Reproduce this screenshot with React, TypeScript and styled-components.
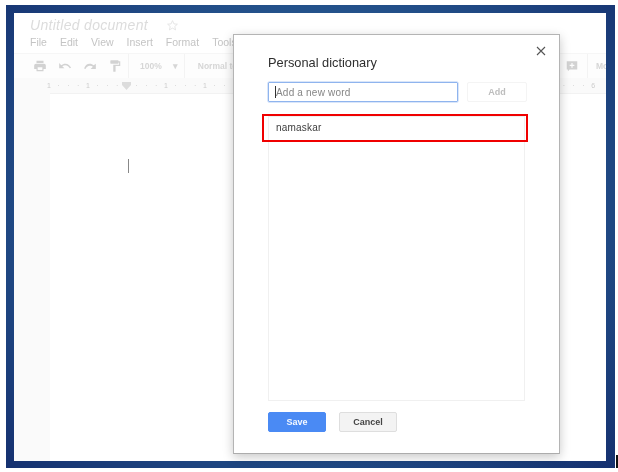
import styled, { createGlobalStyle } from "styled-components"

const GlobalStyle = createGlobalStyle`
  html, body {
    margin: 0;
    padding: 0;
    background: #fff;
  }
  body {
    font-family: "Liberation Sans", Arial, sans-serif;
  }
`;

const Page = styled.div`
  position: relative;
  width: 618px;
  height: 472px;
  overflow: hidden;
  background: #fff;
  padding: 5px 3px 4px 6px;
  box-sizing: border-box;
  filter: blur(0.3px);
`;

const Frame = styled.div`
  height: 100%;
  box-sizing: border-box;
  padding: 8px 9px 7px 8px;
  background: radial-gradient(ellipse at 50% 45%, #2f639b 0%, #24538c 55%, #15306f 100%);
`;

const Doc = styled.div`
  height: 100%;
  display: flex;
  flex-direction: column;
  overflow: hidden;
  background: #fff;
`;

const TitleRow = styled.div`
  display: flex;
  align-items: center;
  gap: 18px;
  height: 22px;
  padding: 2px 0 0 16px;
  box-sizing: border-box;
`;

const DocTitle = styled.span`
  font-size: 14px;
  font-style: italic;
  color: #dcdcdc;
  letter-spacing: 0.3px;
`;

const MenuRow = styled.div`
  display: flex;
  gap: 13px;
  height: 14px;
  align-items: center;
  padding-left: 16px;
`;

const MenuItem = styled.span`
  font-size: 10.5px;
  color: #c4c4c4;
`;

const Toolbar = styled.div`
  display: flex;
  align-items: center;
  height: 25px;
  margin-top: 4px;
  padding-left: 19px;
  background: #fdfdfd;
  border-top: 1px solid #f6f6f6;
  box-sizing: border-box;
`;

const ToolGroup = styled.div`
  display: flex;
  align-items: center;
  gap: 11px;
  height: 100%;
  padding-right: 6px;
  margin-right: 11px;
  border-right: 1px solid #f3f3f3;
`;

const ToolLabel = styled.span`
  font-size: 8.5px;
  font-weight: bold;
  color: #d6d6d6;
`;

const StyleLabel = styled(ToolLabel)`
  margin-left: 2px;
  white-space: nowrap;
`;

const RightTools = styled.div`
  display: flex;
  align-items: center;
  flex: 0 0 41px;
  height: 100%;
  margin-left: auto;
  overflow: hidden;
`;

const RightGroup = styled(ToolGroup)`
  padding-right: 8px;
  margin-right: 8px;
`;

const Ruler = styled.div`
  display: flex;
  align-items: center;
  justify-content: space-between;
  height: 15px;
  padding: 0 8px 0 30px;
  background: #fafafa;
`;

const RulerPart = styled.div`
  display: flex;
  align-items: center;
`;

const RulerMark = styled.span<{ $dot?: boolean }>`
  flex: 0 0 9.75px;
  display: flex;
  justify-content: center;
  font-size: 7px;
  color: ${({ $dot }) => ($dot ? "#d0d0d0" : "#cccccc")};
`;

const Workspace = styled.div`
  flex: 1;
  display: flex;
  background: #fafafa;
  padding-left: 36px;
`;

const Sheet = styled.div`
  flex: 1;
  background: #fff;
  padding: 65px 0 0 78px;
  border-top: 1px solid #f2f2f2;
`;

const Caret = styled.div`
  width: 1px;
  height: 14px;
  background: #888;
`;

const Dialog = styled.div`
  position: absolute;
  left: 233px;
  top: 34px;
  width: 327px;
  height: 420px;
  box-sizing: border-box;
  display: flex;
  flex-direction: column;
  padding: 20px 33px 21px 34px;
  background: #fff;
  border: 1px solid #b4b4b4;
  border-bottom-color: #acacac;
  box-shadow: 0 3px 10px rgba(0, 0, 0, 0.22);
`;

const Close = styled.button`
  position: absolute;
  right: 12px;
  top: 10px;
  width: 12px;
  height: 12px;
  padding: 0;
  display: flex;
  border: none;
  background: none;
`;

const Heading = styled.h2`
  margin: 0;
  height: 15px;
  font-size: 12.8px;
  line-height: 15px;
  font-weight: normal;
  color: #2e2e2e;
`;

const AddRow = styled.div`
  display: flex;
  justify-content: space-between;
  margin-top: 12px;
  width: 259px;
`;

const WordInput = styled.div`
  width: 190px;
  height: 20px;
  box-sizing: border-box;
  display: flex;
  align-items: center;
  padding-left: 6px;
  border: 1px solid #8fb4ee;
  box-shadow: 0 0 0 0.5px #b5cdf4;
  border-radius: 1px;
  font-size: 10px;
  letter-spacing: 0.2px;
  color: #858585;
`;

const InputCaret = styled.span`
  width: 1px;
  height: 12px;
  background: #333;
`;

const AddButton = styled.div`
  width: 60px;
  height: 20px;
  display: flex;
  align-items: center;
  justify-content: center;
  border: 1px solid #f4f4f4;
  box-sizing: border-box;
  border-radius: 2px;
  font-size: 9px;
  font-weight: bold;
  color: #bdbdbd;
`;

const WordList = styled.div`
  position: relative;
  flex: 1;
  width: 257px;
  margin-top: 14px;
  border: 1px solid #f0f0f0;
  box-sizing: border-box;
  padding: 5px 0 0 7px;
`;

const Word = styled.div`
  font-size: 10px;
  line-height: 12px;
  letter-spacing: 0.2px;
  color: #3c3c3c;
`;

const Highlight = styled.div`
  position: absolute;
  left: -7px;
  top: -3px;
  width: 266px;
  height: 28px;
  box-sizing: border-box;
  border: 2px solid #f00000;
`;

const Actions = styled.div`
  display: flex;
  gap: 13px;
  margin-top: 11px;
`;

const ActionButton = styled.div<{ $primary?: boolean }>`
  width: 58px;
  height: 20px;
  display: flex;
  align-items: center;
  justify-content: center;
  box-sizing: border-box;
  border-radius: 2px;
  font-size: 9px;
  font-weight: bold;
  color: ${({ $primary }) => ($primary ? "#f4f8ff" : "#444")};
  background: ${({ $primary }) => ($primary ? "#4a8af4" : "#f3f3f3")};
  border: 1px solid ${({ $primary }) => ($primary ? "#4a8af4" : "#dedede")};
`;

const EdgeMark = styled.div`
  position: absolute;
  left: 616px;
  top: 455px;
  width: 2px;
  height: 13px;
  background: #111;
`;

const menus = ["File", "Edit", "View", "Insert", "Format", "Tools"];

// only the ends of the ruler show, the dialog covers the middle
const rulerStart = ["1", "", "", "", "1", "", "", "", "marker", "", "", "", "1", "", "", "", "1", "", ""];
const rulerEnd = ["", "", "", "6"];

const ToolIcon = ({ d }: { d: string }) => (
  <svg width="14" height="14" viewBox="0 0 24 24" fill="#d2d2d2">
    <path d={d} />
  </svg>
);

const renderMark = (mark: string, i: number) => {
  if (mark === "marker") {
    return (
      <RulerMark key={i}>
        <svg width="9" height="8" viewBox="0 0 9 8" fill="#dcdcdc">
          <path d="M0 0h9v3L4.5 8 0 3z" />
        </svg>
      </RulerMark>
    );
  }
  return mark ? <RulerMark key={i}>{mark}</RulerMark> : <RulerMark key={i} $dot>·</RulerMark>;
};

export default function App() {
  return (
    <Page>
      <GlobalStyle />
      <Frame>
        <Doc>
          <TitleRow>
            <DocTitle>Untitled document</DocTitle>
            <svg width="13" height="13" viewBox="0 0 24 24" fill="none" stroke="#e2e2e2" strokeWidth="1.6">
              <path d="M12 3l2.7 6 6.3.6-4.8 4.2 1.5 6.3L12 16.8l-5.7 3.3 1.5-6.3L3 9.6 9.3 9z" />
            </svg>
          </TitleRow>
          <MenuRow>
            {menus.map((item) => (
              <MenuItem key={item}>{item}</MenuItem>
            ))}
          </MenuRow>
          <Toolbar>
            <ToolGroup>
              <ToolIcon d="M19 8H5a3 3 0 0 0-3 3v6h4v4h12v-4h4v-6a3 3 0 0 0-3-3zm-3 11H8v-5h8v5zM18 3H6v4h12V3z" />
              <ToolIcon d="M12.5 8c-2.65 0-5.05 1-6.9 2.6L2 7v9h9l-3.6-3.6c1.4-1.2 3.2-1.9 5.1-1.9 3.5 0 6.5 2.3 7.6 5.5l2.4-.8C21 11.5 17 8 12.5 8z" />
              <ToolIcon d="M18.4 10.6C16.5 9 14.1 8 11.5 8 7 8 3 11.5 1.9 16.2l2.4.8c1.1-3.2 4.1-5.5 7.6-5.5 1.9 0 3.7.7 5.1 1.9L13 17h9V8z" />
              <ToolIcon d="M18 4V3a1 1 0 0 0-1-1H5a1 1 0 0 0-1 1v4a1 1 0 0 0 1 1h12a1 1 0 0 0 1-1V6h1v4H9v11a1 1 0 0 0 1 1h2a1 1 0 0 0 1-1v-9h8V4h-3z" />
            </ToolGroup>
            <ToolGroup>
              <ToolLabel>100%</ToolLabel>
              <ToolLabel>▾</ToolLabel>
            </ToolGroup>
            <StyleLabel>Normal text</StyleLabel>
            <RightTools>
              <RightGroup>
                <ToolIcon d="M3 4h18v14H8l-3 3v-3H3zm8 3v3H8v2h3v3h2v-3h3v-2h-3V7z" />
              </RightGroup>
              <ToolLabel>Mo</ToolLabel>
            </RightTools>
          </Toolbar>
          <Ruler>
            <RulerPart>{rulerStart.map(renderMark)}</RulerPart>
            <RulerPart>{rulerEnd.map(renderMark)}</RulerPart>
          </Ruler>
          <Workspace>
            <Sheet>
              <Caret />
            </Sheet>
          </Workspace>
        </Doc>
      </Frame>
      <Dialog>
        <Close aria-label="Close">
          <svg width="12" height="12" viewBox="0 0 12 12" stroke="#555" strokeWidth="1.1" fill="none">
            <path d="M2 2l8 8M10 2l-8 8" />
          </svg>
        </Close>
        <Heading>Personal dictionary</Heading>
        <AddRow>
          <WordInput>
            <InputCaret />
            Add a new word
          </WordInput>
          <AddButton>Add</AddButton>
        </AddRow>
        <WordList>
          <Word>namaskar</Word>
          <Highlight />
        </WordList>
        <Actions>
          <ActionButton $primary>Save</ActionButton>
          <ActionButton>Cancel</ActionButton>
        </Actions>
      </Dialog>
      <EdgeMark />
    </Page>
  );
}
